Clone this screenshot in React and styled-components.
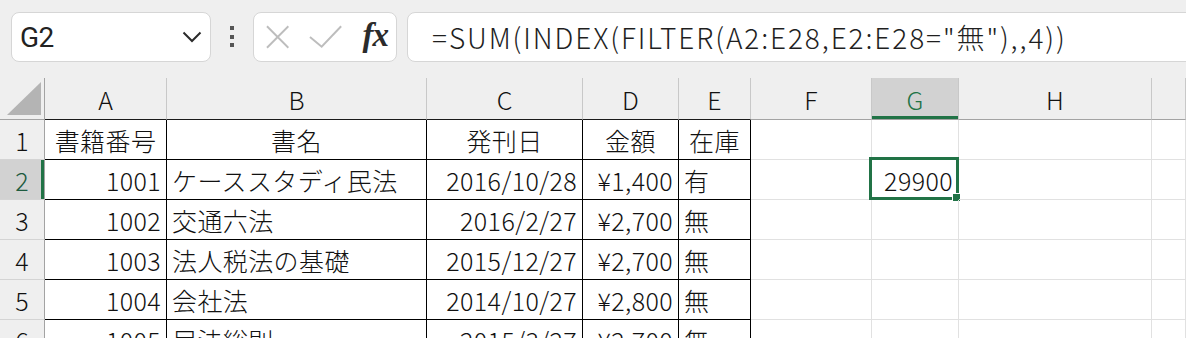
import React from "react";
import styled, { createGlobalStyle } from "styled-components";

const GlobalStyle = createGlobalStyle`
  html, body {
    margin: 0;
    padding: 0;
    background: #efefef;
    overflow: hidden;
  }
  * {
    box-sizing: border-box;
  }
`;

const CELL_FONT = `"Noto Sans CJK JP", "Noto Sans", sans-serif`;
const GREEN = "#217346";

const Page = styled.div`
  width: 1186px;
  font-family: ${CELL_FONT};
  font-weight: 300;
  color: #111;
`;

const FormulaBar = styled.div`
  display: flex;
  align-items: flex-start;
  height: 78px;
  padding: 12px 0 0 11px;
  background: #efefef;
`;

const Panel = styled.div`
  height: 50px;
  background: #fff;
  border: 1px solid #d6d6d6;
  border-radius: 8px;
  display: flex;
  align-items: center;
`;

const NameBox = styled(Panel)`
  width: 200px;
  padding: 0 8px 0 8px;
  justify-content: space-between;
`;

const NameText = styled.span`
  font-family: Roboto, "Liberation Sans", sans-serif;
  font-weight: 400;
  font-size: 28px;
  color: #222;
  letter-spacing: -0.5px;
`;

const DotsSlot = styled.div`
  width: 42px;
  height: 50px;
  display: flex;
  align-items: center;
  justify-content: center;
`;

const FxBox = styled(Panel)`
  width: 144px;
  padding: 0 8px 0 12px;
  gap: 20px;
`;

const FxLabel = styled.span`
  font-family: "Liberation Serif", "DejaVu Serif", serif;
  font-style: italic;
  font-weight: 700;
  font-size: 33px;
  color: #2b2b2b;
  margin-left: auto;
  line-height: 1;
  margin-top: -4px;
  letter-spacing: -1px;
`;

const FormulaInput = styled(Panel)`
  flex: 1;
  margin-left: 10px;
  margin-right: -30px;
  padding-left: 24px;
  font-size: 28px;
  letter-spacing: 1.9px;
  color: #1f1f1f;
  white-space: nowrap;
`;

const Grid = styled.div`
  display: grid;
  grid-template-columns: 45px 122px 260px 156px 96px 72px 121px 87px 193px 1fr;
  grid-template-rows: 42px repeat(6, 40px);
  background: #fff;
`;

const Corner = styled.div`
  position: relative;
  background: #efefef;
  border-right: 1px solid #a3a3a3;
  border-bottom: 1px solid #a3a3a3;
`;

const ColHead = styled.div`
  display: flex;
  align-items: center;
  justify-content: center;
  font-size: 25px;
  background: ${(p) => (p.$active ? "#d2d2d2" : "#efefef")};
  color: ${(p) => (p.$active ? GREEN : "#111")};
  border-right: 1px solid #c8c8c8;
  border-bottom: 1px solid ${(p) => (p.$boxed ? "#1a1a1a" : "#a3a3a3")};
  box-shadow: ${(p) => (p.$active ? `inset 0 -3px 0 ${GREEN}` : "none")};
`;

const RowHead = styled.div`
  display: flex;
  align-items: center;
  justify-content: center;
  font-size: 25px;
  background: ${(p) => (p.$active ? "#d2d2d2" : "#efefef")};
  color: ${(p) => (p.$active ? "#1d5b3f" : "#111")};
  border-right: 1px solid #a3a3a3;
  border-bottom: 1px solid #d4d4d4;
  box-shadow: ${(p) => (p.$active ? `inset -3px 0 0 ${GREEN}` : "none")};
`;

const Cell = styled.div`
  position: relative;
  display: flex;
  align-items: center;
  justify-content: ${(p) =>
    p.$align === "right" ? "flex-end" : p.$align === "center" ? "center" : "flex-start"};
  padding: 0 5px 0 5px;
  font-size: 25px;
  letter-spacing: 0.4px;
  white-space: nowrap;
  overflow: visible;
  border-right: 1px solid ${(p) => (p.$boxed ? "#000" : "#e1e1e1")};
  border-bottom: 1px solid ${(p) => (p.$boxed ? "#000" : "#e1e1e1")};
`;

const Selection = styled.div`
  position: absolute;
  top: -3px;
  left: -3px;
  right: -1px;
  bottom: -1px;
  border: 3px solid ${GREEN};
  pointer-events: none;
`;

const FillHandle = styled.div`
  position: absolute;
  right: -4px;
  bottom: -4px;
  width: 8px;
  height: 8px;
  background: ${GREEN};
  border-left: 1px solid #fff;
  border-top: 1px solid #fff;
`;

const Chevron = () => (
  <svg width="20" height="12" viewBox="0 0 20 12">
    <path d="M1.5 1.5 L10 10 L18.5 1.5" fill="none" stroke="#2b2b2b" strokeWidth="2" />
  </svg>
);

const Dots = () => (
  <svg width="4" height="22" viewBox="0 0 4 22">
    <rect x="0" y="0" width="4" height="4" fill="#555" />
    <rect x="0" y="9" width="4" height="4" fill="#555" />
    <rect x="0" y="17" width="4" height="4" fill="#555" />
  </svg>
);

const CancelIcon = () => (
  <svg width="24" height="24" viewBox="0 0 24 24">
    <path d="M1 1 L23 23 M23 1 L1 23" stroke="#bdbdbd" strokeWidth="2" fill="none" />
  </svg>
);

const CheckIcon = () => (
  <svg width="34" height="24" viewBox="0 0 34 24">
    <path d="M1 12 L13 22 L33 1" stroke="#bdbdbd" strokeWidth="2" fill="none" />
  </svg>
);

const SelectAll = () => (
  <svg
    width="45"
    height="42"
    viewBox="0 0 45 42"
    style={{ position: "absolute", left: 0, top: 0 }}
  >
    <polygon points="7,37 41,4 41,37" fill="#b4b4b4" />
  </svg>
);

const columns = ["A", "B", "C", "D", "E", "F", "G", "H", ""];
const aligns = ["right", "left", "right", "right", "left"];

const rows = [
  ["書籍番号", "書名", "発刊日", "金額", "在庫"],
  ["1001", "ケーススタディ民法", "2016/10/28", "¥1,400", "有"],
  ["1002", "交通六法", "2016/2/27", "¥2,700", "無"],
  ["1003", "法人税法の基礎", "2015/12/27", "¥2,700", "無"],
  ["1004", "会社法", "2014/10/27", "¥2,800", "無"],
  ["1005", "民法総則", "2015/3/27", "¥2,700", "無"],
];

export default function App() {
  return (
    <Page>
      <GlobalStyle />
      <FormulaBar>
        <NameBox>
          <NameText>G2</NameText>
          <Chevron />
        </NameBox>
        <DotsSlot>
          <Dots />
        </DotsSlot>
        <FxBox>
          <CancelIcon />
          <CheckIcon />
          <FxLabel>fx</FxLabel>
        </FxBox>
        <FormulaInput>=SUM(INDEX(FILTER(A2:E28,E2:E28="無"),,4))</FormulaInput>
      </FormulaBar>

      <Grid>
        <Corner>
          <SelectAll />
        </Corner>
        {columns.map((c, i) => (
          <ColHead key={c || "blank"} $active={c === "G"} $boxed={i < 5}>
            {c}
          </ColHead>
        ))}

        {rows.map((row, r) => (
          <React.Fragment key={r}>
            <RowHead $active={r === 1}>{r + 1}</RowHead>
            {row.map((v, c) => (
              <Cell key={c} $boxed $align={r === 0 ? "center" : aligns[c]}>
                {v}
              </Cell>
            ))}
            <Cell />
            <Cell $align="right">
              {r === 1 && "29900"}
              {r === 1 && (
                <Selection>
                  <FillHandle />
                </Selection>
              )}
            </Cell>
            <Cell />
            <Cell />
          </React.Fragment>
        ))}
      </Grid>
    </Page>
  );
}
